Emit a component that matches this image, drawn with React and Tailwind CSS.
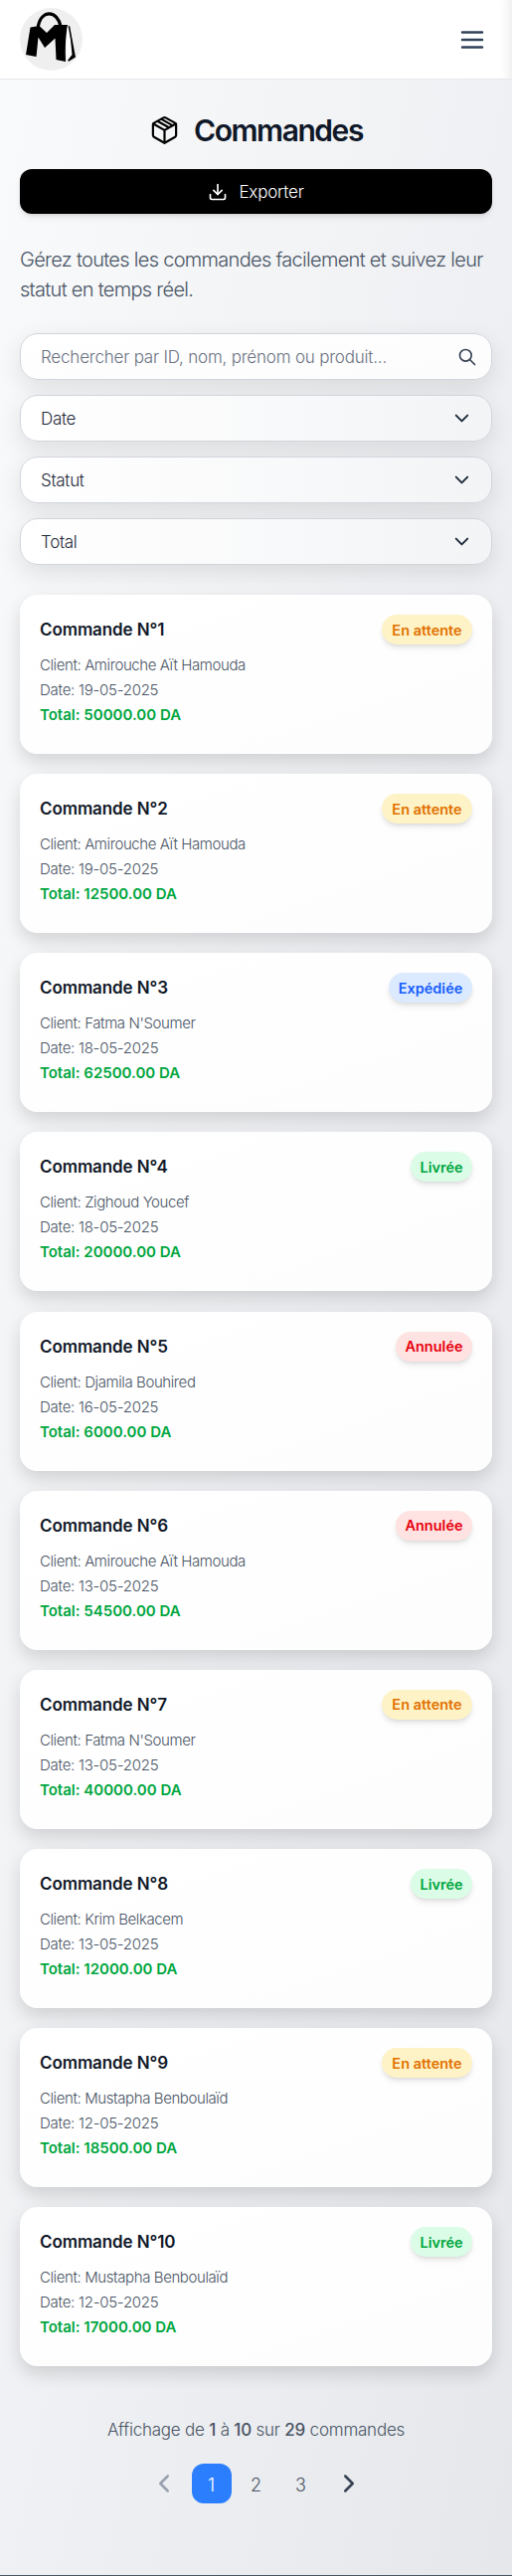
import { ChevronDown, ChevronLeft, ChevronRight, Download } from "lucide-react";

const statusStyles = {
  "En attente": "bg-[#fef3c6] text-[#e17100] w-[91px]",
  "Expédiée": "bg-blue-100 text-[#155dfc] w-[84px]",
  "Livrée": "bg-green-100 text-[#00a63e] w-[62px]",
  "Annulée": "bg-[#ffe2e2] text-[#e7000b] w-[77px]",
};

const orders = [
  [1, "Amirouche Aït Hamouda", "19-05-2025", "50000.00", "En attente"],
  [2, "Amirouche Aït Hamouda", "19-05-2025", "12500.00", "En attente"],
  [3, "Fatma N'Soumer", "18-05-2025", "62500.00", "Expédiée"],
  [4, "Zighoud Youcef", "18-05-2025", "20000.00", "Livrée"],
  [5, "Djamila Bouhired", "16-05-2025", "6000.00", "Annulée"],
  [6, "Amirouche Aït Hamouda", "13-05-2025", "54500.00", "Annulée"],
  [7, "Fatma N'Soumer", "13-05-2025", "40000.00", "En attente"],
  [8, "Krim Belkacem", "13-05-2025", "12000.00", "Livrée"],
  [9, "Mustapha Benboulaïd", "12-05-2025", "18500.00", "En attente"],
  [10, "Mustapha Benboulaïd", "12-05-2025", "17000.00", "Livrée"],
];

function Logo() {
  return (
    <svg width="63" height="63" viewBox="0 0 63 63">
      <circle cx="31.5" cy="31.5" r="31.5" fill="#efefef" />
      <path d="M18 20C19.500 11 24 5.800 29.500 5.800S39.500 11 41 18.500" fill="none" stroke="#000" strokeWidth="3.200" />
      <path d="M10.500 19.500L19.500 18L27 25L35 17H48Q45 34 46 54L36.500 52L35.500 30.500L25 40L18.500 29.500L16.500 49L6 47Z" fill="#000" />
      <path d="M48 17.500Q45.500 36 47.500 54L55.500 49.500L49.500 18Z" fill="#fff" />
      <path d="M48.500 17.500L50.200 18.500L56 49.500L49 53.800L48 52.800L52.500 47Q51.500 32 48.500 17.500Z" fill="#000" />
    </svg>
  );
}

function BoxIcon() {
  return (
    <svg className="h-[31px] w-[31px]" viewBox="0 0 24 24" fill="none" stroke="#000" strokeWidth="1.700" strokeLinecap="round" strokeLinejoin="round">
      <path d="M11.200 2.600a1.600 1.600 0 0 1 1.600 0l7.400 4.100A1.400 1.400 0 0 1 21 8v8.300a1.500 1.500 0 0 1-.8 1.300L12 22.200l-8.200-4.600A1.500 1.500 0 0 1 3 16.300V8a1.400 1.400 0 0 1 .8-1.300z" />
      <path d="m3.300 7.300 8.700 5 8.700-5M12 12.300v9.700M6.800 5.400l8.700 4.800M9.700 3.800l8.500 4.800" />
    </svg>
  );
}

function MenuIcon() {
  return (
    <svg className="mr-[5px] h-[30px] w-[30px] text-slate-700" viewBox="0 0 24 24" fill="none" stroke="currentColor" strokeWidth="2" strokeLinecap="round">
      <path d="M4 6h16M4 12h16M4 18h16" />
    </svg>
  );
}

function SearchIcon() {
  return (
    <svg className="h-5 w-5 text-gray-700" viewBox="0 0 24 24" fill="none" stroke="currentColor" strokeWidth="2" strokeLinecap="round">
      <circle cx="10" cy="10" r="7" />
      <path d="m21 21-6-6" />
    </svg>
  );
}

function Filter({ label }) {
  return (
    <button className="flex h-[47px] items-center justify-between rounded-[18px] border border-gray-300 bg-gradient-to-r from-white to-gray-100 pr-[18px] pl-5 text-gray-800 shadow-[0_8px_24px_rgba(0,0,0,0.1)]">
      <span className="pt-[3px] text-[17px] font-[350] tracking-[-0.3px]">{label}</span>
      <ChevronDown className="h-[23px] w-[23px]" />
    </button>
  );
}

function OrderCard({ order }) {
  const [id, client, date, total, status] = order;
  return (
    <article className="h-[160px] rounded-[18px] bg-gradient-to-br from-white to-[#fdfdfe] p-5 shadow-[0_8px_18px_rgba(0,0,0,0.14)]">
      <div className="flex h-[30px] items-center justify-between">
        <h2 className="pt-px text-[17px] leading-[29px] font-semibold tracking-[-0.1px] text-gray-900">Commande N°{id}</h2>
        <span className={`flex h-[30px] items-center justify-center rounded-full pt-px text-[14.5px] font-semibold whitespace-nowrap shadow-md ${statusStyles[status]}`}>{status}</span>
      </div>
      <div className="mt-2 text-[15px] leading-[25px] font-light text-gray-600">
        <p className="tracking-[-0.4px]">Client: {client}</p>
        <p className="tracking-[-0.25px]">Date: {date}</p>
        <p className="font-semibold text-[#00a63e]">Total: {total} DA</p>
      </div>
    </article>
  );
}

export default function App() {
  return (
    <div className="h-[2590px] overflow-hidden border-b border-gray-600 bg-gradient-to-br from-gray-50 to-gray-200 font-['Inter',sans-serif]">
      <header className="flex h-20 items-center justify-between border-b border-gray-200 bg-white px-5 shadow-[inset_-12px_0_14px_-12px_rgba(0,0,0,0.12)]">
        <Logo />
        <MenuIcon />
      </header>
      <main className="px-5 pt-[30px]">
        <div className="flex h-11 items-center justify-center gap-[14px]">
          <div className="pb-[3px]"><BoxIcon /></div>
          <h1 className="pb-[2px] text-[30px] font-semibold tracking-[-1.45px] text-gray-900">Commandes</h1>
        </div>
        <button className="mt-4 flex h-[45px] w-full items-center justify-center gap-[11px] rounded-xl bg-black text-white shadow-md">
          <Download className="h-5 w-5" />
          <span className="pt-[2px] text-[17px] font-light tracking-[-0.2px]">Exporter</span>
        </button>
        <p className="mt-[31px] text-[20px] leading-[30px] font-light tracking-[-0.7px] text-gray-600">Gérez toutes les commandes facilement et suivez leur statut en temps réel.</p>
        <div className="mt-[29px] flex flex-col gap-[15px]">
          <div className="flex h-[47px] items-center justify-between rounded-[18px] border border-gray-300 bg-gradient-to-br from-white to-[#fcfcfd] pr-[14px] pl-5 shadow-[0_8px_24px_rgba(0,0,0,0.1)]">
            <span className="pt-[3px] text-[17px] font-light tracking-[-0.2px] text-gray-500">Rechercher par ID, nom, prénom ou produit...</span>
            <SearchIcon />
          </div>
          <Filter label="Date" />
          <Filter label="Statut" />
          <Filter label="Total" />
        </div>
        <section className="mt-[30px] flex flex-col gap-[20.14px]">
          {orders.map((order) => <OrderCard key={order[0]} order={order} />)}
        </section>
        <p className="mt-[51px] text-center text-[17px] leading-[26px] font-light tracking-[-0.22px] text-gray-600">Affichage de <b className="font-medium">1</b> à <b className="font-medium">10</b> sur <b className="font-medium">29</b> commandes</p>
        <nav className="mt-[21px] flex items-center justify-center text-[18px] font-light text-gray-600">
          <ChevronLeft className="mr-[13px] h-[30px] w-[30px] text-gray-400" />
          <span className="flex h-10 w-10 items-center justify-center rounded-xl bg-[#2b7fff] pt-[2px] text-white">1</span>
          <span className="ml-[5px] flex h-10 w-10 items-center justify-center pt-[2px]">2</span>
          <span className="ml-[5px] flex h-10 w-10 items-center justify-center pt-[2px]">3</span>
          <ChevronRight className="ml-[13px] h-[30px] w-[30px] text-gray-700" />
        </nav>
      </main>
    </div>
  );
}
